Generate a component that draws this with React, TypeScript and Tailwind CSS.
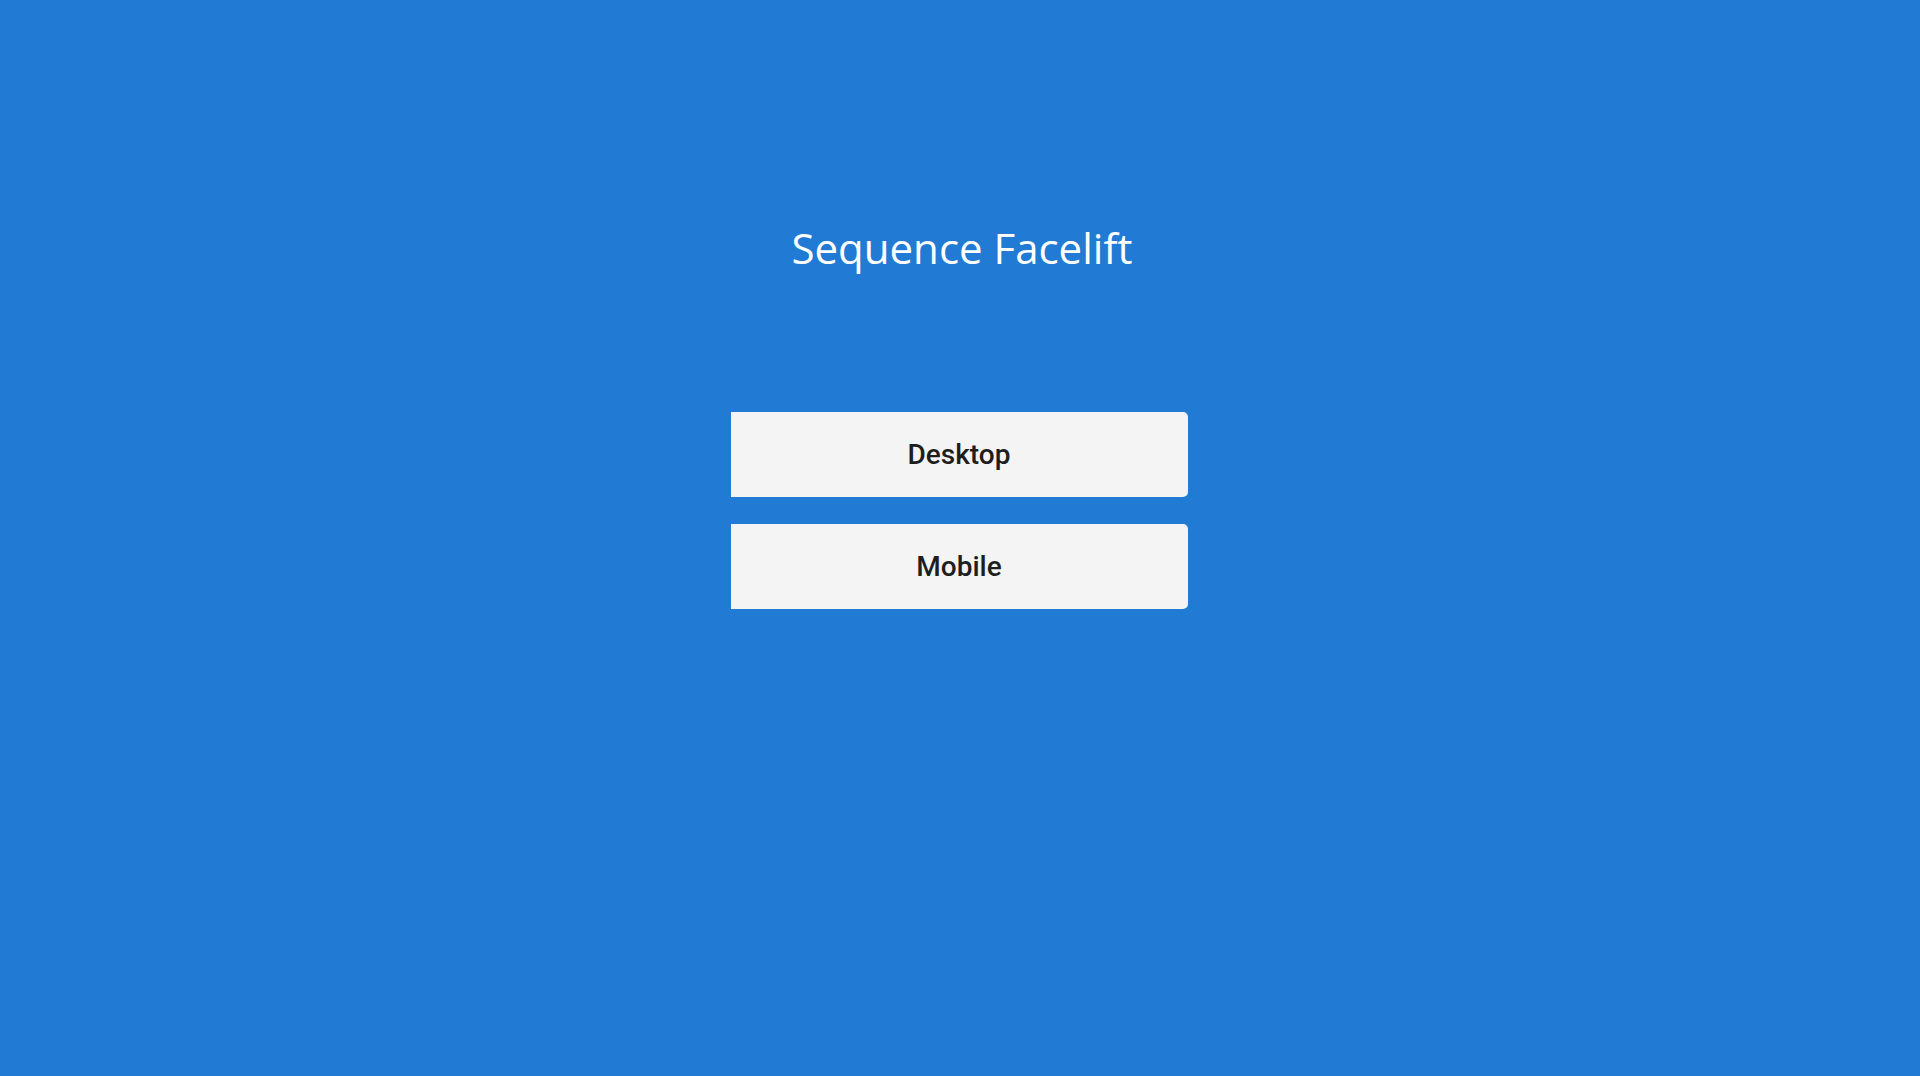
export default function App() {
  return (
    <div className="min-h-[1076px] w-full bg-[#217bd4] flex flex-col items-center">
      <h1 className="mt-[221px] text-[42px] leading-[54px] text-white font-normal font-['Open_Sans',sans-serif] translate-x-[2px]">
        Sequence Facelift
      </h1>
      <div className="mt-[137px] flex flex-col gap-[27px] w-[457px] -translate-x-[1px]">
        {['Desktop', 'Mobile'].map((label) => (
          <button
            key={label}
            className="h-[85px] w-full bg-[#f4f4f4] rounded-r-[5px] text-[28px] font-medium text-[#1e1e1e] font-['Roboto',sans-serif]"
          >
            {label}
          </button>
        ))}
      </div>
    </div>
  )
}
